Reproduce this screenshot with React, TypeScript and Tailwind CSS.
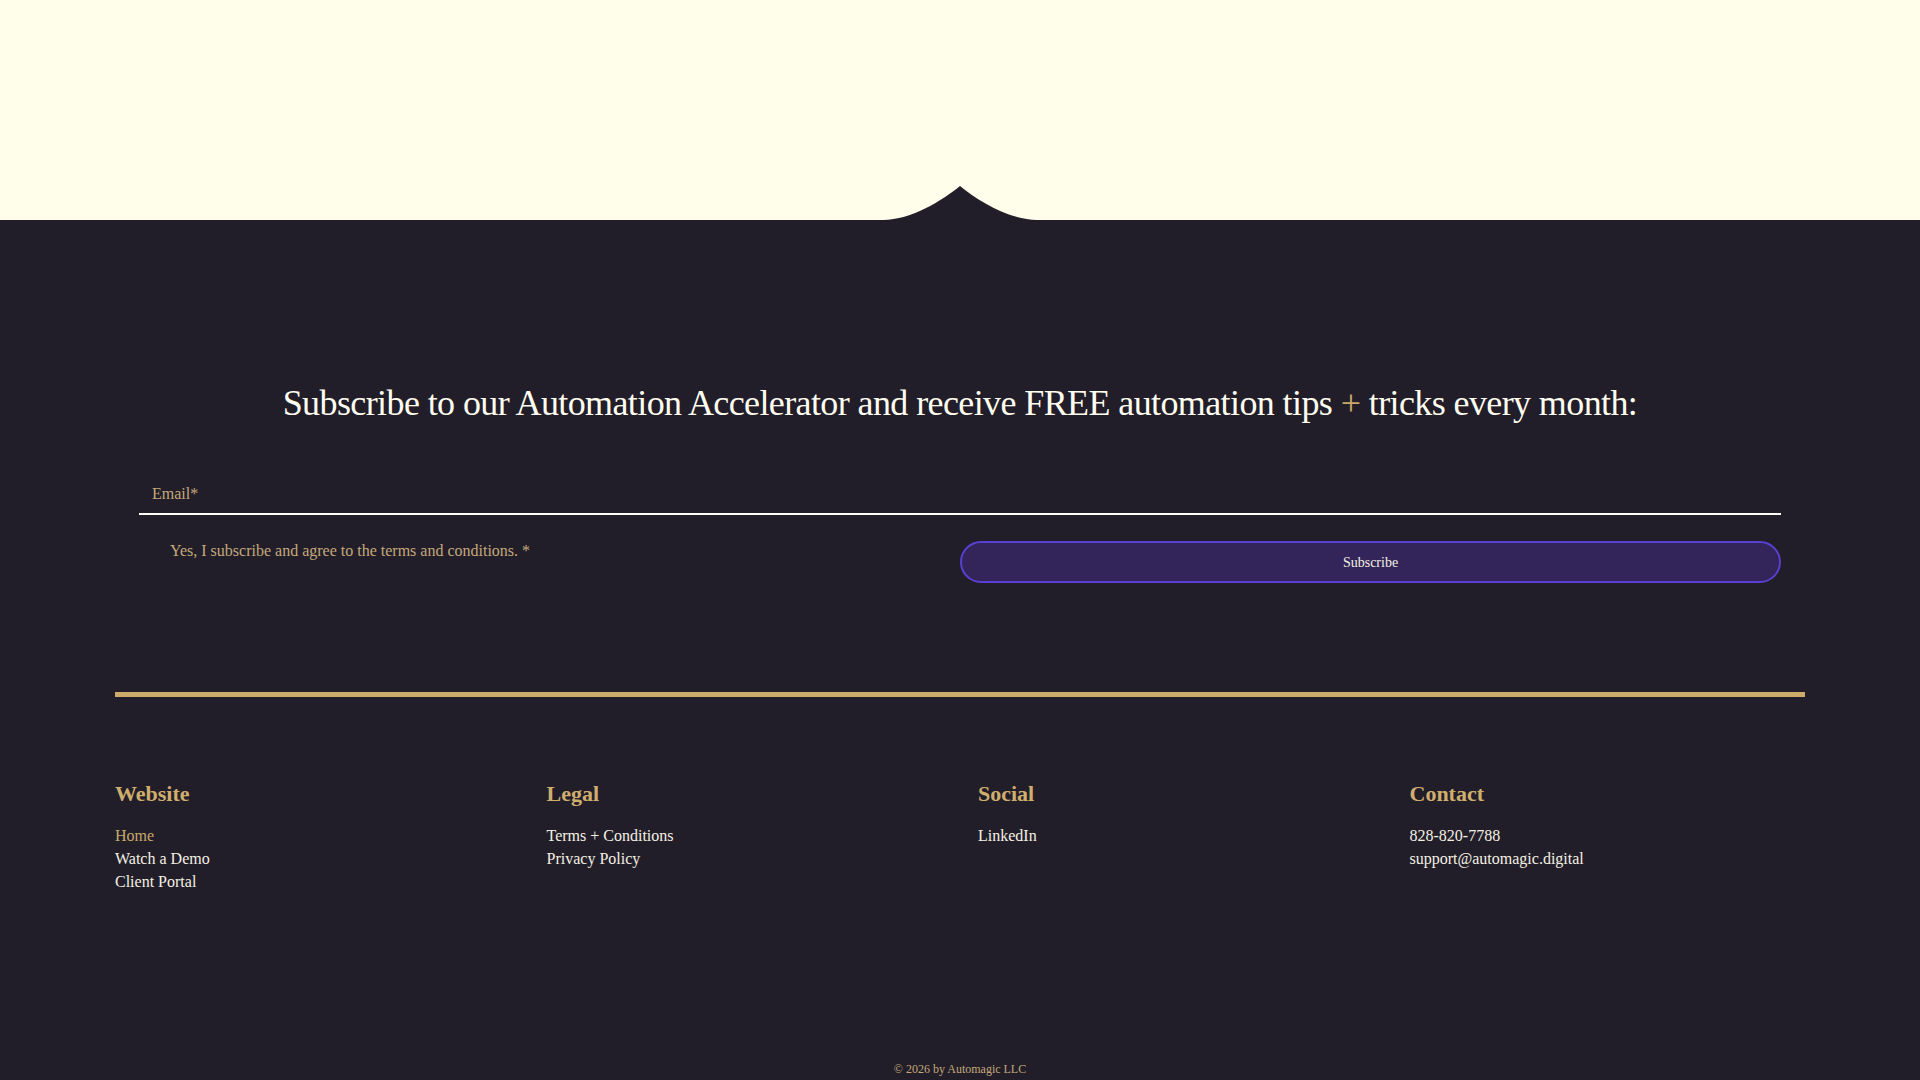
import { useState } from 'react'

const serif = "font-['Liberation_Serif','Times_New_Roman',serif]"

const columns = [
  { title: 'Website', links: ['Home', 'Watch a Demo', 'Client Portal'] },
  { title: 'Legal', links: ['Terms + Conditions', 'Privacy Policy'] },
  { title: 'Social', links: ['LinkedIn'] },
  { title: 'Contact', links: ['828-820-7788', 'support@automagic.digital'] },
]

export default function App() {
  const [email, setEmail] = useState('')
  const [agree, setAgree] = useState(false)

  return (
    <div className={`w-full min-h-screen bg-[#221e29] ${serif}`}>
      {/* Cream top band with notch */}
      <div className="h-[220px] bg-[#fffeea] flex items-end justify-center">
        <svg width="154" height="34" viewBox="0 0 154 34" className="block">
          <path d="M0 34 C 28 34 60 14 77 0 C 94 14 126 34 154 34 Z" fill="#221e29" />
        </svg>
      </div>

      {/* Newsletter */}
      <section className="pt-[162px]">
        <h2 className="text-center text-[36px] leading-[43px] tracking-[-0.6px] text-[#fffdf0]">
          Subscribe to our Automation Accelerator and receive FREE automation tips{' '}
          <span className="text-[#c9a96a]">+</span> tricks every month:
        </h2>

        <form
          onSubmit={(e) => e.preventDefault()}
          className="mx-[139px] mt-[48px]"
        >
          <label className="flex items-center h-[42px] border-b-2 border-[#fffdf5]">
            <input
              type="email"
              value={email}
              onChange={(e) => setEmail(e.target.value)}
              placeholder="Email*"
              className="w-full bg-transparent px-[13px] pt-[2px] text-[16px] text-[#f4f1e4] placeholder:text-[#c4a97c] outline-none"
            />
          </label>

          <div className="grid grid-cols-2 mt-[26px]">
            <label className="flex items-start gap-2 pl-[31px] cursor-pointer">
              <input
                type="checkbox"
                checked={agree}
                onChange={(e) => setAgree(e.target.checked)}
                className="sr-only"
              />
              <span className="text-[16px] leading-[19px] text-[#c4a97c]">
                Yes, I subscribe and agree to the terms and conditions. *
              </span>
            </label>
            <button
              type="submit"
              className="h-[42px] rounded-full border-2 border-[#5a40d2] bg-[#33245a] text-[14px] text-[#f4f1e4]"
            >
              Subscribe
            </button>
          </div>
        </form>
      </section>

      {/* Footer */}
      <footer className="px-[115px] pt-[109px]">
        <div className="h-[5px] bg-[#cdac6b]" />

        <div className="grid grid-cols-4 gap-x-[36px] pt-[84px]">
          {columns.map((col) => (
            <div key={col.title}>
              <h3 className="text-[22px] leading-[26px] font-bold text-[#cfae6e]">{col.title}</h3>
              <ul className="mt-[18px] space-y-[1px]">
                {col.links.map((l, i) => (
                  <li
                    key={l}
                    className={`text-[16px] leading-[22px] ${
                      col.title === 'Website' && i === 0 ? 'text-[#c9a96a]' : 'text-[#f4f1e4]'
                    }`}
                  >
                    {l}
                  </li>
                ))}
              </ul>
            </div>
          ))}
        </div>

        <p className="text-center text-[12px] leading-[16px] text-[#c4a97c] pt-[168px] pb-[4px]">
          © 2026 by Automagic LLC
        </p>
      </footer>
    </div>
  )
}
